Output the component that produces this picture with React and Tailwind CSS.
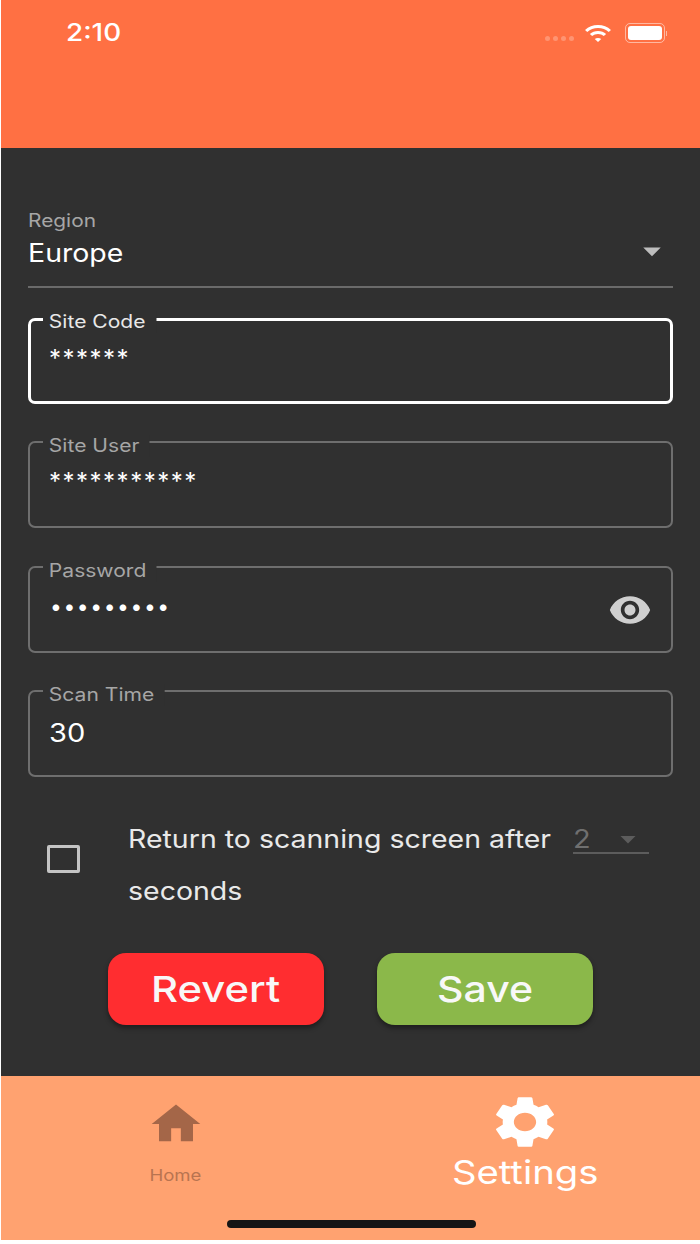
import React from "react";
import { MdHome, MdSettings, MdVisibility, MdArrowDropDown } from "react-icons/md";

// the screenshot is stretched sideways, so text gets pulled out to the same width
const Wide = ({ children, tight, className = "origin-left" }) => (
  <span className={`inline-block whitespace-nowrap ${tight ? "scale-x-[1.14]" : "scale-x-[1.16]"} ${className}`}>
    {children}
  </span>
);

const OutlinedField = ({ label, value, focused, masked, dots, icon, className }) => {
  return (
    <div
      className={`relative h-[87px] rounded-[7px] ${
        focused ? "border-[3px] border-white" : "border-2 border-[#6e6e6e]"
      } ${className}`}
    >
      <span
        className={`absolute origin-left scale-x-[1.17] whitespace-nowrap bg-[#303030] pl-[5px] pr-[9px] text-[18px] leading-[22px] ${
          focused ? "left-[12px] top-[-10px] text-[#e8e8e8]" : "left-[13px] top-[-8px] text-[#a6a6a6]"
        }`}
      >
        {label}
      </span>
      <div
        className={`absolute text-white ${focused ? "left-[18px] top-[22px]" : "left-[19px] top-[23px]"} ${
          dots
            ? "left-[20px] text-[21px] leading-[32px] tracking-[1.6px]"
            : masked
              ? "text-[24px] leading-[32px] tracking-[1.5px]"
              : "text-[25px] leading-[36px]"
        }`}
      >
        {masked ? value : <Wide>{value}</Wide>}
      </div>
      {icon && <div className="absolute right-[19px] top-[20px] text-[#cfcfcf]">{icon}</div>}
    </div>
  );
};

const StatusBar = () => (
  <div className="flex items-start justify-between pl-[65px] pr-[33px] pt-[18px]">
    <span className="text-[24px] font-medium leading-[30px] text-white">
      <Wide>2:10</Wide>
    </span>
    <div className="flex items-center pt-[5px]">
      <div className="mr-[10px] mt-[10px] flex gap-[3px]">
        <span className="h-[5px] w-[5px] rounded-full bg-white/25" />
        <span className="h-[5px] w-[5px] rounded-full bg-white/25" />
        <span className="h-[5px] w-[5px] rounded-full bg-white/25" />
        <span className="h-[5px] w-[5px] rounded-full bg-white/25" />
      </div>
      <svg width="28" height="20" viewBox="0 0 26 20" fill="none" stroke="white" strokeWidth="3" preserveAspectRatio="none">
        <path d="M2 8 C8 2 18 2 24 8" />
        <path d="M6.5 12 C10 8.5 16 8.5 19.5 12" />
        <path d="M10 16 L13 19 L16 16 C14.5 14.5 11.5 14.5 10 16 Z" fill="white" stroke="none" />
      </svg>
      <div className="ml-[13px] flex items-center">
        <div className="flex h-[20px] w-[40px] items-center justify-center rounded-[5px] border border-white/50">
          <div className="h-[14px] w-[34px] rounded-[3px] bg-white" />
        </div>
        <div className="ml-px h-[5px] w-[1px] bg-white/50" />
      </div>
    </div>
  </div>
);

export default function App() {
  return (
    <div className="h-[1244px] w-[700px] bg-white pb-[4px] pl-px font-['Inter',sans-serif]">
      <div className="flex h-[1240px] flex-col">
        <header className="h-[148px] bg-[#ff7043]">
          <StatusBar />
        </header>

        <main className="flex-1 bg-[#303030] pl-[27px] pr-[27px]">
          {/* Region select */}
          <div className="mt-[62px] h-[78px] border-b-2 border-[#6a6a6a]">
            <div className="text-[18px] leading-[22px] text-[#a6a6a6]">
              <Wide className="origin-left">Region</Wide>
            </div>
            <div className="flex h-[38px] items-center justify-between">
              <span className="mt-[3px] text-[25px] leading-[38px] text-white">
                <Wide tight>Europe</Wide>
              </span>
              <MdArrowDropDown size={42} className="text-[#bdbdbd]" />
            </div>
          </div>

          <OutlinedField className="mt-[30px] !h-[86px]" label="Site Code" value="******" focused masked />
          <OutlinedField className="mt-[37px]" label="Site User" value="***********" masked />
          <OutlinedField
            className="mt-[38px]"
            label="Password"
            value="•••••••••"
            masked
            dots
            icon={<MdVisibility size={44} />}
          />
          <OutlinedField className="mt-[37px]" label="Scan Time" value="30" />

          {/* Return to scanning option */}
          <div className="mt-[36px] flex">
            <div className="ml-[19px] mt-[32px] h-[28px] w-[33px] rounded-[2px] border-[3px] border-[#c4c4c4]" />
            <div className="ml-[48px] w-[540px] text-[25px] leading-[52px] text-[#e9e9e9]">
              <div className="flex items-center">
                <Wide tight>Return to scanning screen after</Wide>
                <div className="ml-[74px] flex h-[30px] w-[76px] items-center justify-between border-b-2 border-[#5c5c5c] pt-px text-[#6f6f6f]">
                  <Wide>2</Wide>
                  <MdArrowDropDown size={36} className="mr-[3px] text-[#5c5c5c]" />
                </div>
              </div>
              <Wide tight>seconds</Wide>
            </div>
          </div>

          {/* Actions */}
          <div className="mt-[36px] flex justify-center gap-[53px]">
            <button className="h-[72px] w-[216px] rounded-[18px] bg-[#ff2d30] text-[36px] font-medium text-[#f8f8f8] shadow-[0_3px_5px_rgba(0,0,0,0.4)]">
              <Wide className="origin-center">Revert</Wide>
            </button>
            <button className="h-[72px] w-[216px] rounded-[18px] bg-[#8bb84a] text-[36px] font-medium text-[#f8f8f8] shadow-[0_3px_5px_rgba(0,0,0,0.4)]">
              <Wide tight className="origin-center">Save</Wide>
            </button>
          </div>
        </main>

        <nav className="relative flex h-[164px] bg-[#ffa270]">
          <div className="flex w-[349px] flex-col items-center pt-[22px]">
            <MdHome size={52} className="scale-x-[1.12] text-[#a46648]" />
            <span className="mt-[15px] text-[16px] leading-[20px] text-[#b87450]">
              <Wide className="origin-center">Home</Wide>
            </span>
          </div>
          <div className="flex flex-1 flex-col items-center pt-[15px]">
            <MdSettings size={62} className="scale-x-[1.2] text-white" />
            <span className="mt-[-2px] text-[33px] leading-[42px] text-white">
              <Wide className="origin-center">Settings</Wide>
            </span>
          </div>
          <div className="absolute bottom-[12px] left-[226px] h-[8px] w-[249px] rounded-full bg-[#151515]" />
        </nav>
      </div>
    </div>
  );
}
